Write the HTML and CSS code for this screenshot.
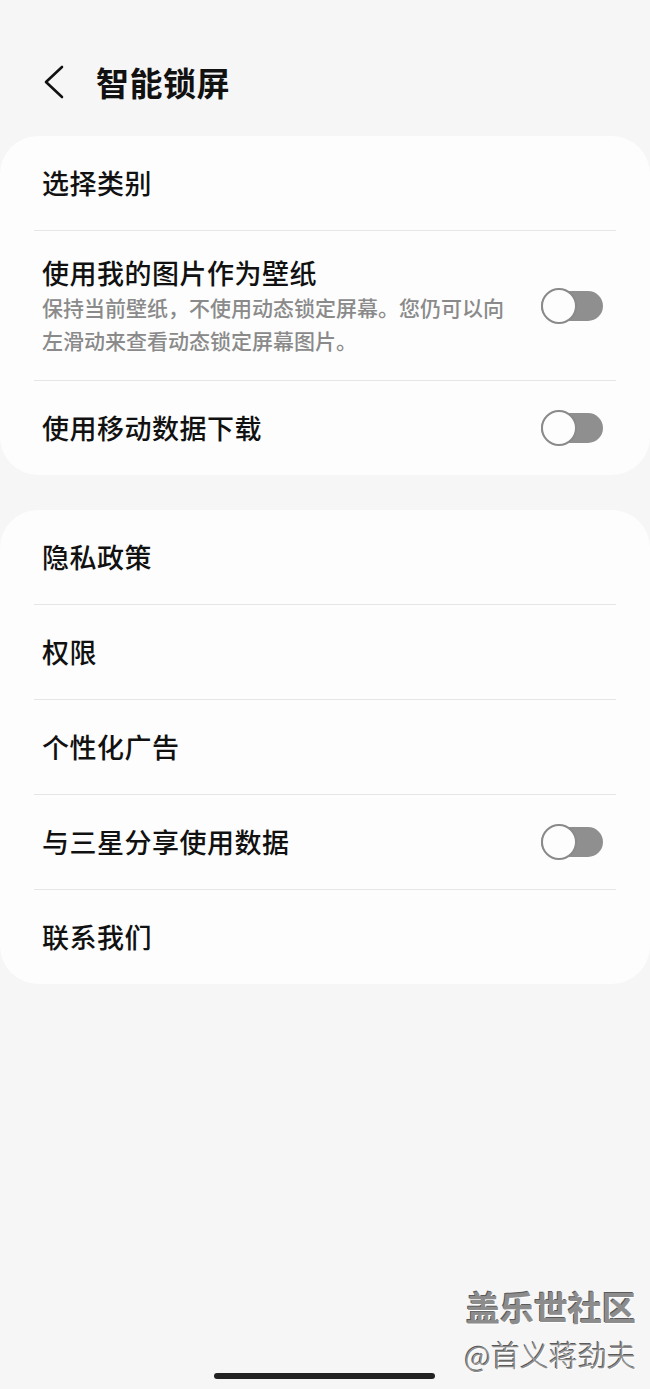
FILE: index.html
```html
<!DOCTYPE html>
<html lang="zh-CN">
<head>
    <meta charset="UTF-8">
    <meta name="viewport" content="width=device-width, initial-scale=1.0">
    <title>智能锁屏</title>
    <link rel="stylesheet" href="styles.css">
</head>
<body>
    <div class="page">
        <header class="header">
            <svg class="back" width="20" height="34" viewBox="0 0 20 34">
                <polyline points="18,2 2,17 18,32" fill="none" stroke="#111" stroke-width="2.6" stroke-linecap="round" stroke-linejoin="round"/>
            </svg>
            <h1>智能锁屏</h1>
        </header>

        <div class="card">
            <div class="row">
                <div class="label">选择类别</div>
            </div>
            <div class="row tall">
                <div class="text">
                    <div class="label">使用我的图片作为壁纸</div>
                    <div class="desc">保持当前壁纸，不使用动态锁定屏幕。您仍可以向左滑动来查看动态锁定屏幕图片。</div>
                </div>
                <div class="toggle"><span class="knob"></span></div>
            </div>
            <div class="row">
                <div class="label">使用移动数据下载</div>
                <div class="toggle"><span class="knob"></span></div>
            </div>
        </div>

        <div class="card">
            <div class="row">
                <div class="label">隐私政策</div>
            </div>
            <div class="row">
                <div class="label">权限</div>
            </div>
            <div class="row">
                <div class="label">个性化广告</div>
            </div>
            <div class="row">
                <div class="label">与三星分享使用数据</div>
                <div class="toggle"><span class="knob"></span></div>
            </div>
            <div class="row">
                <div class="label">联系我们</div>
            </div>
        </div>
    </div>

    <div class="watermark">
        <div class="wm-title">盖乐世社区</div>
        <div class="wm-user">@首义蒋劲夫</div>
    </div>
    <div class="home-bar"></div>
</body>
</html>
```

FILE: styles.css
```css
body {
    background: #f6f6f6;
    color: #111;
    font-family: "Noto Sans CJK SC", "Noto Sans", sans-serif;
    margin: 0;
    width: 650px;
    height: 1389px;
    position: relative;
    overflow: hidden;
}
.header {
    height: 108px;
    padding-top: 28px;
    display: flex;
    align-items: center;
    padding-left: 44px;
}
.back {
    display: block;
}
.header h1 {
    margin: 0 0 0 32px;
    font-size: 33px;
    font-weight: 700;
    letter-spacing: 0.5px;
}
.card {
    background: #fdfdfd;
    border-radius: 38px;
    padding: 0 34px;
    margin-bottom: 35px;
}
.row {
    display: flex;
    align-items: center;
    justify-content: space-between;
    min-height: 94px;
    padding: 0 13px 0 8px;
    border-bottom: 1px solid #e6e6e6;
}
.row:last-child {
    border-bottom: none;
}
.row.tall {
    padding-top: 24px;
    padding-bottom: 23px;
    min-height: 0;
}
.label {
    font-size: 27px;
    font-weight: 500;
    line-height: 36px;
    letter-spacing: 0.5px;
}
.text {
    width: 470px;
}
.desc {
    font-size: 21px;
    line-height: 33px;
    color: #8a8a8a;
    font-weight: 500;
}
.toggle {
    position: relative;
    width: 62px;
    height: 30px;
    background: #8f8f8f;
    border-radius: 15px;
    flex-shrink: 0;
}
.knob {
    position: absolute;
    left: 0;
    top: -3px;
    width: 32px;
    height: 32px;
    border: 2px solid #8a8a8a;
    border-radius: 50%;
    background: #fdfdfd;
}
.watermark {
    position: absolute;
    right: 14px;
    top: 1289px;
    text-align: right;
    color: #8c8c8c;
    text-shadow: 1px 1px 0 #ffffff, -1px -1px 0 #5a5a5a;
}
.wm-title {
    font-size: 34px;
    font-weight: 700;
    line-height: 36px;
}
.wm-user {
    font-size: 29px;
    font-weight: 300;
    line-height: 32px;
    margin-top: 13px;
}
.home-bar {
    position: absolute;
    left: 214px;
    top: 1373px;
    width: 221px;
    height: 6px;
    border-radius: 3px;
    background: #222;
}
```
